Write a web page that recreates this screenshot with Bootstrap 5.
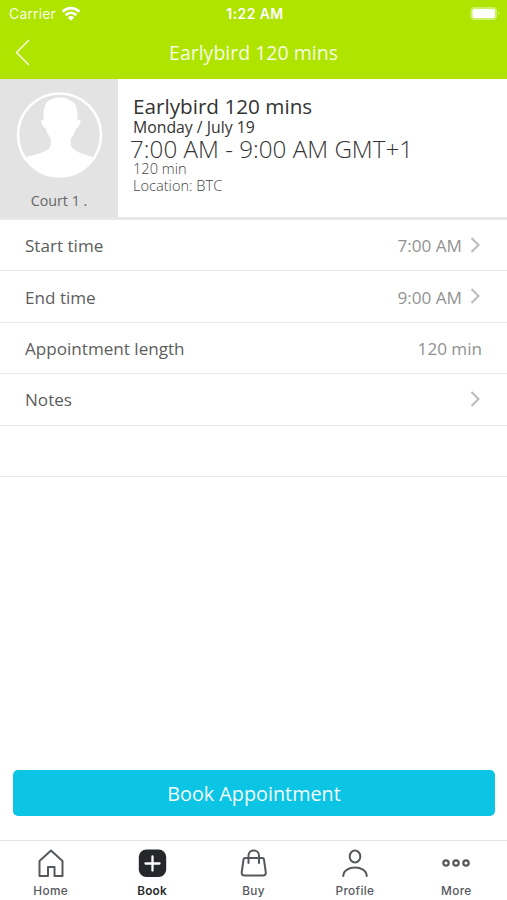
<!DOCTYPE html>
<html lang="en">
<head>
<meta charset="utf-8">
<meta name="viewport" content="width=device-width, initial-scale=1">
<title>Earlybird 120 mins</title>
<link href="https://cdn.jsdelivr.net/npm/bootstrap@5.3.0/dist/css/bootstrap.min.css" rel="stylesheet">
<style>
body{font-family:"Open Sans",sans-serif;height:900px;background:#fff;overflow:hidden;color:#555}
svg{display:block;flex:none}
.app-head{height:79px;background:#aee400;color:#f7fde0}
.status-line{height:27px;font-family:Inter,"Liberation Sans",sans-serif;font-size:14px;line-height:27px;padding:0 6px 0 9px}
.status-line>*{flex:1 1 0}
.carrier{letter-spacing:.15px;padding-right:1px}
.clock{font-weight:600;color:#fff;letter-spacing:.4px}
.title-line{height:52px;padding:0 15px}
.title-line>*{flex:1 1 0}
.title-line h1{flex:none;font-size:19.5px;font-weight:400;line-height:52px;margin:0}
.summary{height:141px;border-bottom:3px solid #e8e8e8}
.staff{width:118px;background:#e3e3e3;font-size:14.3px;line-height:20px;color:#666;padding-top:12px}
.staff span{margin-top:12px}
.details{padding:15px 0 0 15px;white-space:nowrap}
.service{font-size:20.7px;line-height:24px;color:#333}
.day{font-size:15.8px;line-height:18px;color:#333}
.hours{font-size:24.2px;font-weight:300;line-height:26px;color:#333;margin-left:-3px}
.extra{font-size:14.6px;font-weight:300;line-height:17px;color:#444}
.hours+.extra{margin-top:-2px}
.fields .list-group-item{height:51.4px;padding:2px 25px 0;border-color:#e9e9e9;border-width:0 0 1px;color:#5d5d5d;font-size:17.1px;line-height:24px;background:#fff}
.fields .list-group-item:last-child{border-bottom-width:1px}
.fields .worth{color:#929292}
.fields svg{margin:-3px 1px 0 8px}
.book-btn{height:46px;margin:0 12px 24px 13px;padding:0;border:0;border-radius:5px;background:#0cc4e4;color:#f2fdff;font-size:19.8px;line-height:47px}
.book-btn:hover{background:#0cc4e4;color:#fff}
.tabs{height:60px;border-top:1.5px solid #e2e3e5}
.tabs .nav-link{padding:7px 0 0;color:#55585d;font-family:Inter,sans-serif;font-weight:500;font-size:11.8px;line-height:16px;letter-spacing:.35px}
.tabs .nav-link svg{margin-bottom:5px}
.tabs .nav-link.active{color:#292b2f;font-weight:600;letter-spacing:.2px}
</style>
<script src="https://cdn.jsdelivr.net/npm/bootstrap@5.3.0/dist/js/bootstrap.bundle.min.js"></script>
</head>
<body class="d-flex flex-column">
<header class="app-head">
  <div class="status-line d-flex align-items-center">
    <div class="d-flex align-items-center gap-1"><span class="carrier">Carrier</span>
      <svg width="20" height="16" viewBox="0 0 20 16" fill="none" stroke="#fff" stroke-width="2.700"><path d="M1.700 5.700C6.500.9 13.500.9 18.300 5.700M4.700 9.200C7.900 6.100 12.100 6.100 15.300 9.200"/><path d="M10 14.800 6.700 11.400Q10 8.800 13.300 11.400Z" fill="#fff" stroke="none"/></svg></div>
    <div class="clock text-center">1:22 AM</div>
    <div class="d-flex justify-content-end"><svg width="31" height="15" viewBox="0 0 31 15"><rect x=".5" y="1" width="26.500" height="13" rx="4" fill="#cdf064"/><rect x="2.500" y="3" width="22.500" height="9" rx="2" fill="#fff"/><path d="M28.500 5.500q2 2 0 4z" fill="#d8f488"/></svg></div>
  </div>
  <div class="title-line d-flex align-items-center">
    <div><svg width="15" height="28" viewBox="0 0 15 28" fill="none" stroke="#f7fde0" stroke-width="1.500"><path d="M14 1 1.500 13.500 14 26"/></svg></div>
    <h1>Earlybird 120 mins</h1>
    <div></div>
  </div>
</header>
<section class="summary d-flex">
  <div class="staff d-flex flex-column align-items-center">
    <svg width="88" height="88" viewBox="0 0 88 88"><circle cx="44.500" cy="44" r="41.500" fill="none" stroke="#fff" stroke-width="2.600"/><path fill="#fff" d="M11 66Q19 64.500 27 61.500C32 59.500 35.500 57.500 35.700 54V47C33 44 31.500 41 30.800 37.500 28.500 37 25 31 26.500 29.300L28.700 29C28 23 28.500 18 30.300 14 32.500 9 38 6.700 45 6.500 49 6.300 52 7 54 9 58 9.500 60.500 13 61.700 17.500 62.800 22 62.700 25.500 62.300 29L65.300 29C66.500 31 63.500 36.500 61 37.800 60 41.500 58 45 55.700 47.500V54C57 57.500 61 60 65.500 62Q71.500 64.500 78 66C69.500 79 58.500 86 44.500 86S19.500 79 11 66Z"/></svg>
    <span>Court 1 .</span>
  </div>
  <div class="details">
    <div class="service"><span>Earlybird 120 mins</span></div>
    <div class="day"><span>Monday / July 19</span></div>
    <div class="hours"><span>7:00 AM - 9:00 AM GMT+1</span></div>
    <div class="extra"><span>120 min</span></div>
    <div class="extra"><span>Location: BTC</span></div>
  </div>
</section>
<ul class="fields list-group list-group-flush">
  <li class="list-group-item d-flex align-items-center"><span>Start time</span><span class="worth ms-auto">7:00 AM</span><svg width="11" height="16" viewBox="0 0 11 16" fill="none" stroke="#bbb" stroke-width="2"><path d="m1.500 1 7 7-7 7"/></svg></li>
  <li class="list-group-item d-flex align-items-center"><span>End time</span><span class="worth ms-auto">9:00 AM</span><svg width="11" height="16" viewBox="0 0 11 16" fill="none" stroke="#bbb" stroke-width="2"><path d="m1.500 1 7 7-7 7"/></svg></li>
  <li class="list-group-item d-flex align-items-center"><span>Appointment length</span><span class="worth ms-auto">120 min</span></li>
  <li class="list-group-item d-flex align-items-center"><span>Notes</span><svg class="ms-auto" width="11" height="16" viewBox="0 0 11 16" fill="none" stroke="#bbb" stroke-width="2"><path d="m1.500 1 7 7-7 7"/></svg></li>
  <li class="list-group-item"></li>
</ul>
<button type="button" class="btn book-btn mt-auto">Book Appointment</button>
<nav class="tabs nav nav-fill flex-nowrap">
  <a class="nav-item nav-link d-flex flex-column align-items-center w-100" href="#"><svg width="30" height="30" viewBox="0 0 30 30" fill="none" stroke="#55585d" stroke-width="2" stroke-linejoin="round"><path d="M3.500 13 15 2.500 26.500 13V28H18.500V19H12V28H3.500Z"/></svg>Home</a>
  <a class="nav-item nav-link active d-flex flex-column align-items-center w-100" href="#"><svg width="30" height="30" viewBox="0 0 30 30"><rect x="1.800" y="1.500" width="27.400" height="27.500" rx="7.500" fill="#25272a"/><path d="M15.500 8.500v14M8.500 15.500h14" stroke="#fff" stroke-width="2.300" stroke-linecap="round"/></svg>Book</a>
  <a class="nav-item nav-link d-flex flex-column align-items-center w-100" href="#"><svg width="30" height="30" viewBox="0 0 30 30" fill="none" stroke="#55585d" stroke-width="2" stroke-linecap="round" stroke-linejoin="round"><path d="M6.200 10H23.300Q24.800 10 25 11.500L26.800 24.500Q27 27.500 24 27.500H5.500Q2.500 27.500 2.700 24.500L4.500 11.500Q4.700 10 6.200 10ZM9.500 15V7.500C9.500 .8 20 .8 20 7.500V15"/></svg>Buy</a>
  <a class="nav-item nav-link d-flex flex-column align-items-center w-100" href="#"><svg width="30" height="30" viewBox="0 0 30 30" fill="none" stroke="#55585d" stroke-width="2" stroke-linecap="round"><ellipse cx="15" cy="8.500" rx="5.300" ry="6"/><path d="M3.300 28C3.600 16.800 26.400 16.800 26.700 28"/></svg>Profile</a>
  <a class="nav-item nav-link d-flex flex-column align-items-center w-100" href="#"><svg width="30" height="30" viewBox="0 0 30 30" fill="none" stroke="#55585d" stroke-width="2.200"><circle cx="5" cy="15" r="2.700"/><circle cx="15" cy="15" r="2.700"/><circle cx="25" cy="15" r="2.700"/></svg>More</a>
</nav>
</body>
</html>
